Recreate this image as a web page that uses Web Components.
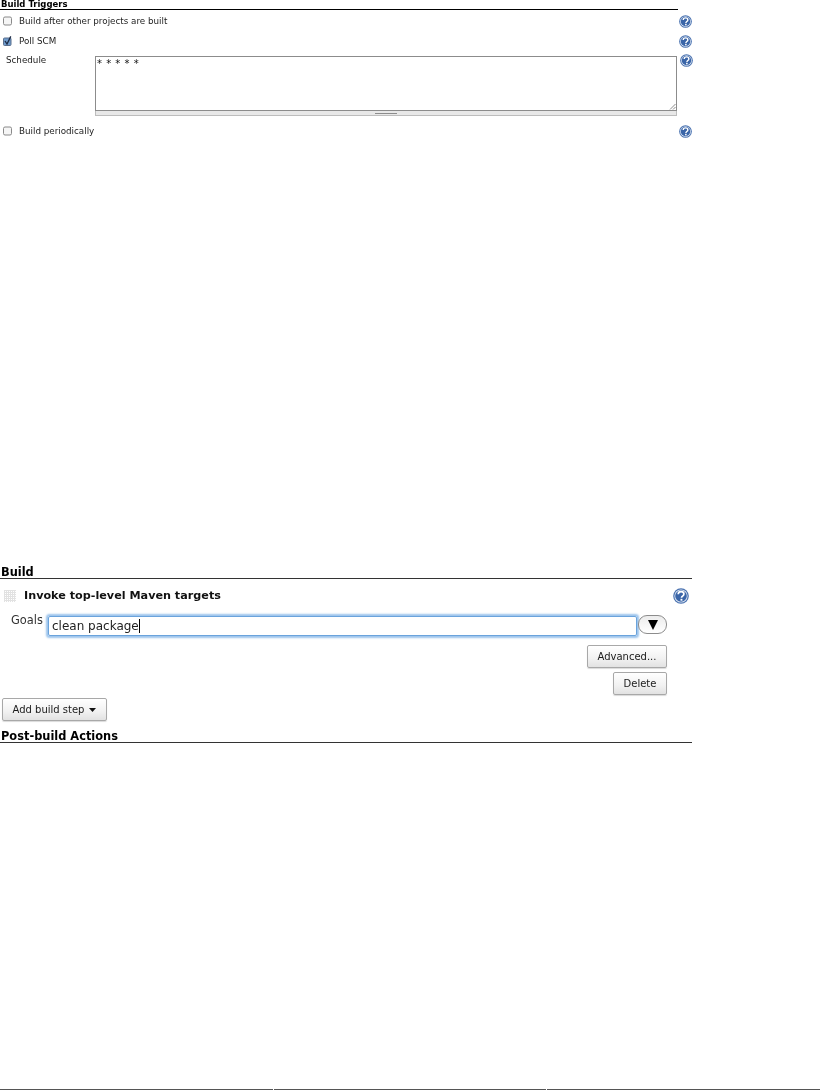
<!DOCTYPE html>
<html>
<head>
<meta charset="utf-8">
<title>Job configuration</title>
<style>
  html, body { margin: 0; padding: 0; background: #fff; }
  body { width: 820px; height: 1090px; overflow: hidden; display: flex; flex-direction: column; }
  jk-triggers { height: 562px; }
  jk-build { height: 527px; }
</style>
</head>
<body>
<jk-triggers></jk-triggers>
<jk-build></jk-build>
<jk-footer-line></jk-footer-line>

<script>
  class HelpIcon extends HTMLElement {
    constructor() {
      super();
      this.attachShadow({ mode: 'open' });
    }
    connectedCallback() {
      const size = this.getAttribute('size') || 13;
      this.shadowRoot.innerHTML = `
        <style>
          :host { display: block; width: ${size}px; height: ${size}px; }
          svg { display: block; }
        </style>
        <svg width="${size}" height="${size}" viewBox="0 0 16 16">
          <circle cx="8" cy="8" r="7.8" fill="#4a72b0"/>
          <circle cx="8" cy="8" r="6.6" fill="#e4ebf5"/>
          <circle cx="8" cy="8" r="5.8" fill="#3a65a8"/>
          <path d="M5.2 6.2c0-1.7 1.3-2.6 2.9-2.6s2.8.9 2.8 2.4c0 2.1-2.4 2-2.4 3.7" fill="none" stroke="#fff" stroke-width="1.7"/>
          <rect x="7.5" y="10.8" width="1.9" height="1.9" fill="#fff"/>
        </svg>
      `;
    }
  }

  class SectionHeader extends HTMLElement {
    constructor() {
      super();
      this.attachShadow({ mode: 'open' });
    }
    connectedCallback() {
      this.shadowRoot.innerHTML = `
        <style>
          :host {
            display: block;
            font-family: "DejaVu Sans", sans-serif;
            font-weight: bold;
            font-size: var(--head-size, 8.5px);
            line-height: var(--head-line, 9px);
            color: #000;
            border-bottom: 1px solid var(--head-rule, #000);
            padding-left: 1px;
            white-space: nowrap;
          }
        </style>
        <slot></slot>
      `;
    }
  }

  class TriggerRow extends HTMLElement {
    constructor() {
      super();
      this.attachShadow({ mode: 'open' });
    }
    connectedCallback() {
      const checked = this.hasAttribute('checked');
      this.shadowRoot.innerHTML = `
        <style>
          :host {
            display: flex;
            align-items: center;
            height: 20px;
            font-family: "DejaVu Sans", sans-serif;
            font-size: 8.75px;
            color: #222;
          }
          .box { width: 9px; height: 10px; margin: 0 7px 0 3px; flex: none; }
          .label { flex: 1; white-space: nowrap; }
        </style>
        <svg class="box" viewBox="0 0 9 10">
          ${checked
            ? `<rect x=".5" y="2" width="7.5" height="7.5" rx="1" fill="#6f9bcc" stroke="#5a6f8c"/>
               <path d="M2 5l2 3 3.8-7.6" fill="none" stroke="#1c2a44" stroke-width="1.3"/>`
            : `<rect x=".5" y="1" width="8" height="8" rx="1.5" fill="#f6f6f6" stroke="#8a8a8a"/>`}
        </svg>
        <span class="label"><slot></slot></span>
        <help-icon size="13"></help-icon>
      `;
    }
  }

  class ScheduleField extends HTMLElement {
    constructor() {
      super();
      this.attachShadow({ mode: 'open' });
    }
    connectedCallback() {
      this.shadowRoot.innerHTML = `
        <style>
          :host {
            display: grid;
            grid-template-columns: 95px 582px 13px;
            font-family: "DejaVu Sans", sans-serif;
            font-size: 8.75px;
            color: #222;
          }
          .label { padding: 0 0 0 6px; line-height: 9px; }
          .area {
            height: 60px;
            display: flex;
            flex-direction: column;
          }
          .text {
            flex: 1;
            position: relative;
            border: 1px solid #8c8c8c;
            padding: 2px 1px;
            font-size: 10px;
            line-height: 10px;
            letter-spacing: 0.5px;
            color: #111;
          }
          .grip-corner { position: absolute; right: 0; bottom: 0; }
          .bar {
            height: 4px;
            background: #e8e8e8;
            border: 1px solid #bdbdbd;
            border-top: 0;
            display: flex;
            align-items: center;
            justify-content: center;
          }
          .bar i { display: block; width: 22px; height: 1px; background: #8c8c8c; }
          help-icon { margin: -2px 0 0 3px; }
        </style>
        <div class="label">Schedule</div>
        <div class="area">
          <div class="text">* * * * *
            <svg class="grip-corner" width="7" height="7" viewBox="0 0 7 7">
              <path d="M1 6.5L6.5 1M4 6.5L6.5 4" stroke="#8c8c8c" fill="none"/>
            </svg>
          </div>
          <div class="bar"><i></i></div>
        </div>
        <help-icon size="13"></help-icon>
      `;
    }
  }

  class JkTriggers extends HTMLElement {
    constructor() {
      super();
      this.attachShadow({ mode: 'open' });
    }
    connectedCallback() {
      this.shadowRoot.innerHTML = `
        <style>
          :host { display: block; }
          .wrap { width: 692px; filter: blur(0.3px); }
          section-header { width: 677px; }
          .rows { padding-top: 1px; }
          schedule-field { margin: 5px 0 5px; }
        </style>
        <div class="wrap">
          <section-header>Build Triggers</section-header>
          <div class="rows">
            <trigger-row>Build after other projects are built</trigger-row>
            <trigger-row checked>Poll SCM</trigger-row>
            <schedule-field></schedule-field>
            <trigger-row>Build periodically</trigger-row>
          </div>
        </div>
      `;
    }
  }

  class MacButton extends HTMLElement {
    constructor() {
      super();
      this.attachShadow({ mode: 'open' });
    }
    connectedCallback() {
      this.shadowRoot.innerHTML = `
        <style>
          :host {
            display: inline-flex;
            align-items: center;
            justify-content: center;
            box-sizing: border-box;
            height: 23px;
            border: 1px solid #a8a8a8;
            border-radius: 2px;
            background: linear-gradient(#fff, #f1f1f1 60%, #e2e2e2);
            box-shadow: 0 1px 1px rgba(0,0,0,.15);
            font-family: "DejaVu Sans", sans-serif;
            font-size: 10px;
            color: #1a1a1a;
            white-space: nowrap;
          }
        </style>
        <slot></slot>
      `;
    }
  }

  class JkBuild extends HTMLElement {
    constructor() {
      super();
      this.attachShadow({ mode: 'open' });
    }
    connectedCallback() {
      this.shadowRoot.innerHTML = `
        <style>
          :host { display: block; font-family: "DejaVu Sans", sans-serif; }
          .wrap { width: 692px; filter: blur(0.3px); }
          section-header {
            --head-size: 11.4px;
            --head-line: 12px;
            --head-rule: #333;
            margin-top: 4px;
          }
          .step-head {
            display: flex;
            align-items: center;
            height: 25px;
            margin-top: 4px;
            padding-left: 4px;
            font-size: 11.2px;
            font-weight: bold;
            color: #111;
          }
          .step-head span { flex: 1; margin-left: 8px; }
          .step-head help-icon { margin-right: 3px; }
          .grip {
            width: 12px;
            height: 12px;
            background-image:
              linear-gradient(#e2e2e2 1px, transparent 1px),
              linear-gradient(90deg, #e2e2e2 1px, transparent 1px);
            background-size: 2px 2px;
          }
          .goals {
            display: flex;
            align-items: center;
            height: 23px;
            margin-top: 6px;
            padding-left: 11px;
            font-size: 11.4px;
            color: #333;
          }
          .goals label { width: 36px; align-self: flex-start; line-height: 13px; }
          .input {
            box-sizing: border-box;
            width: 589px;
            height: 20px;
            margin: 0 1px;
            border: 1px solid #6aa3dc;
            border-radius: 2px;
            box-shadow: 0 0 2px 1.5px #9cc4ec;
            padding-left: 3px;
            display: flex;
            align-items: center;
            font-size: 12px;
            color: #222;
          }
          .caret { width: 1px; height: 14px; background: #000; }
          .drop {
            box-sizing: border-box;
            width: 29px;
            height: 19px;
            margin: -2px 0 0 0;
            border: 1px solid #8c8c8c;
            border-radius: 9px;
            background: linear-gradient(#ececec, #fff);
            display: flex;
            align-items: center;
            justify-content: center;
          }
          .drop svg { display: block; }
          .actions {
            display: flex;
            flex-direction: column;
            align-items: flex-end;
            gap: 4px;
            width: 667px;
            margin-top: 8px;
          }
          .adv { width: 80px; }
          .del { width: 54px; }
          .add {
            width: 105px;
            margin: 3px 0 0 2px;
          }
          .add svg { margin-left: 5px; }
          .post { margin-top: 9px; }
        </style>
        <div class="wrap">
          <section-header>Build</section-header>
          <div class="step-head">
            <div class="grip"></div>
            <span>Invoke top-level Maven targets</span>
            <help-icon size="16"></help-icon>
          </div>
          <div class="goals">
            <label>Goals</label>
            <div class="input">clean package<div class="caret"></div></div>
            <div class="drop">
              <svg width="10" height="10" viewBox="0 0 10 10"><path d="M0 0h10L5 10z" fill="#000"/></svg>
            </div>
          </div>
          <div class="actions">
            <mac-button class="adv">Advanced...</mac-button>
            <mac-button class="del">Delete</mac-button>
          </div>
          <mac-button class="add">Add build step
            <svg width="7" height="4" viewBox="0 0 7 4"><path d="M0 0h7L3.5 4z" fill="#111"/></svg>
          </mac-button>
          <section-header class="post">Post-build Actions</section-header>
        </div>
      `;
    }
  }

  class JkFooterLine extends HTMLElement {
    constructor() {
      super();
      this.attachShadow({ mode: 'open' });
    }
    connectedCallback() {
      this.shadowRoot.innerHTML = `
        <style>
          :host {
            display: grid;
            grid-template-columns: 273px 272px 1fr;
            column-gap: 1px;
            height: 1px;
          }
          div { background: #555; }
        </style>
        <div></div><div></div><div></div>
      `;
    }
  }

  customElements.define('help-icon', HelpIcon);
  customElements.define('section-header', SectionHeader);
  customElements.define('trigger-row', TriggerRow);
  customElements.define('schedule-field', ScheduleField);
  customElements.define('jk-triggers', JkTriggers);
  customElements.define('mac-button', MacButton);
  customElements.define('jk-build', JkBuild);
  customElements.define('jk-footer-line', JkFooterLine);
</script>
</body>
</html>
